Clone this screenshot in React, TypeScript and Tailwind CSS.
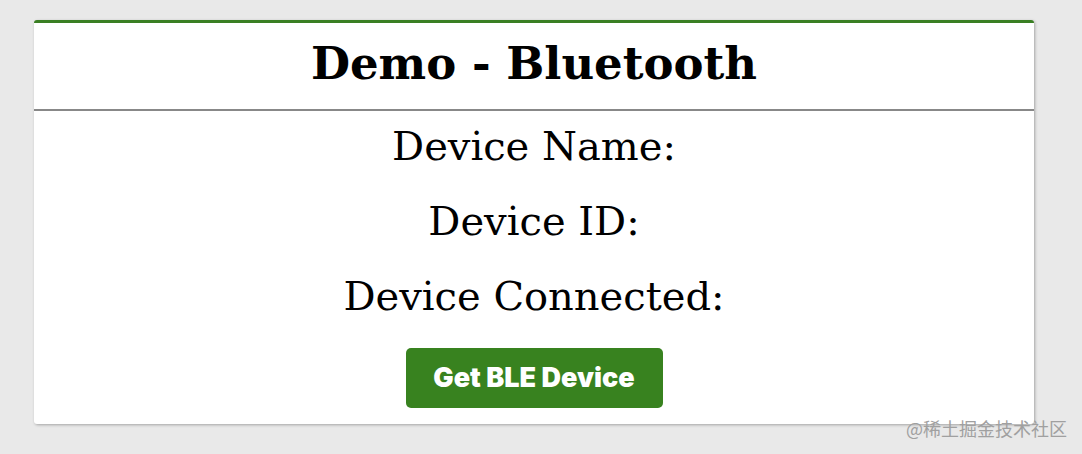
export default function App() {
    return (
        <div className="relative h-[454px] w-[1082px] bg-[#e9e9e9] pt-[20px]">
            <div className="ml-[34px] w-[1000px] rounded-[3px] border-t-[3px] border-[#3a7f23] bg-white shadow-[1px_1px_3px_rgba(0,0,0,0.3)]">
                <div className="flex h-[88px] items-center justify-center border-b-2 border-[#888] pb-[4px]">
                    <h1 className="font-['DejaVu_Serif',serif] text-[45px] font-bold text-black">
                        Demo - Bluetooth
                    </h1>
                </div>
                <div className="-mt-[2px] flex flex-col items-center pb-[16px] font-['DejaVu_Serif',serif] text-[40px] font-light text-black">
                    <p className="leading-[75px]">Device Name:</p>
                    <p className="leading-[75px]">Device ID:</p>
                    <p className="leading-[75px]">Device Connected:</p>
                    <button className="mt-[14px] h-[60px] w-[257px] rounded-[5px] bg-[#38821f] font-['Inter',sans-serif] text-[27px] font-black text-white">
                        Get BLE Device
                    </button>
                </div>
            </div>
            <span className="absolute left-[906px] top-[415px] font-['Noto_Sans_CJK_SC',sans-serif] text-[18px] text-[#a0a0a0]">
                @稀土掘金技术社区
            </span>
        </div>
    )
}
